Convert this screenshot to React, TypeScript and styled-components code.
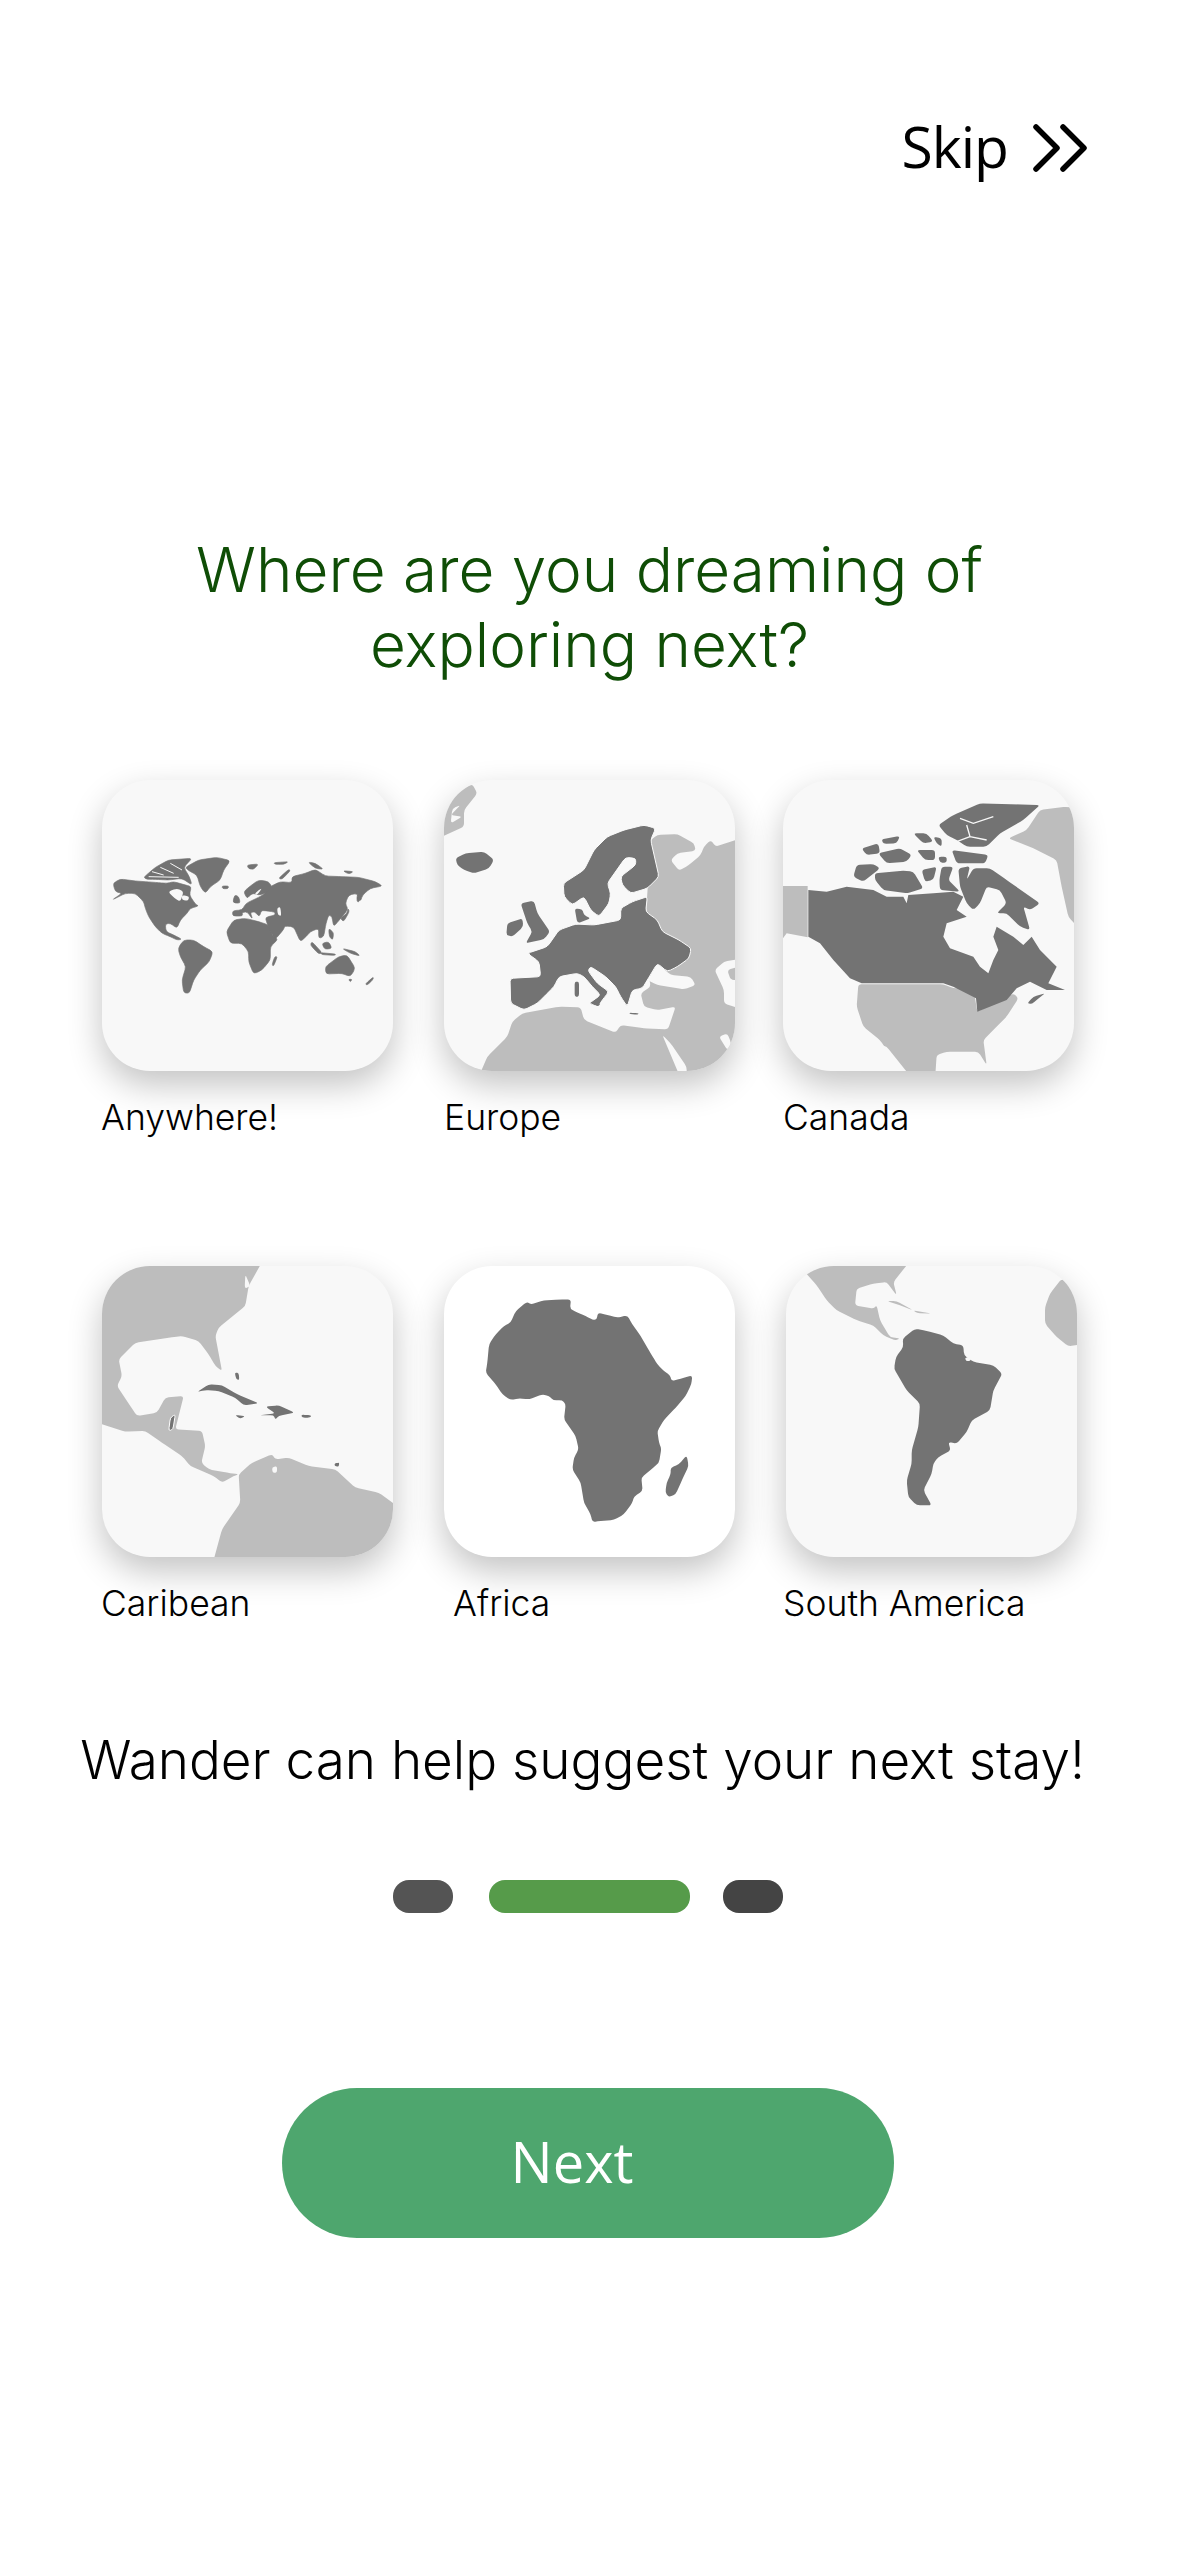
import React from "react";
import styled, { createGlobalStyle } from "styled-components";

const DARK = "#737373";
const LIGHT = "#bdbdbd";
const SEA = "#f8f8f8";

const GlobalStyle = createGlobalStyle`
  html, body {
    margin: 0;
    padding: 0;
    background: #ffffff;
  }
`;

const Page = styled.div`
  width: 1179px;
  height: 2556px;
  overflow: hidden;
  background: #ffffff;
  font-family: Inter, "Liberation Sans", sans-serif;
  color: #000000;
`;

const Header = styled.div`
  display: flex;
  justify-content: flex-end;
  align-items: center;
  gap: 24px;
  height: 60px;
  padding: 118px 91px 0 0;
`;

const SkipText = styled.span`
  position: relative;
  top: -2px;
  font-family: "Open Sans", "Noto Sans", sans-serif;
  font-size: 57px;
  line-height: 60px;
  letter-spacing: -1px;
`;

const Title = styled.h1`
  margin: 354px 0 0;
  font-size: 62px;
  line-height: 75px;
  font-weight: 350;
  text-align: center;
  color: #0f4d06;
`;

const TileRow = styled.div`
  display: flex;
  height: 486px;
  padding-left: 102px;
`;

const Rows = styled.div`
  margin-top: 98px;
`;

const Tile = styled.div<{ $width: number }>`
  width: ${(p) => p.$width}px;
  flex: none;
`;

const Card = styled.div<{ $bg: string }>`
  width: 291px;
  height: 291px;
  border-radius: 48px;
  overflow: hidden;
  background: ${(p) => p.$bg};
  box-shadow: 0 14px 34px rgba(0, 0, 0, 0.24);
`;

const Art = styled.svg`
  display: block;
  width: 291px;
  height: 291px;
  filter: blur(0.35px);
`;

const Label = styled.div<{ $shift: number }>`
  margin: 26px 0 0 ${(p) => p.$shift}px;
  font-size: 35.5px;
  line-height: 42px;
  font-weight: 350;
`;

const Tagline = styled.p`
  margin: -23px 0 0;
  padding-right: 14px;
  font-size: 53px;
  line-height: 62px;
  font-weight: 350;
  text-align: center;
`;

const Dots = styled.div`
  display: flex;
  align-items: center;
  margin: 89px 0 0 393px;
`;

const Dot = styled.div<{ $width: number; $color: string; $gap: number }>`
  width: ${(p) => p.$width}px;
  height: 33px;
  margin-right: ${(p) => p.$gap}px;
  border-radius: 16px;
  background: ${(p) => p.$color};
`;

const NextButton = styled.button`
  display: block;
  width: 612px;
  height: 150px;
  margin: 175px 0 0 282px;
  padding: 0 32px 4px 0;
  border: none;
  border-radius: 75px;
  background: #4ea66e;
  color: #ffffff;
  font-family: "Open Sans", "Noto Sans", sans-serif;
  font-size: 56px;
`;

// traced outlines are straight segments, this rounds the corners so coasts don't look cut
function roundCoast(d: string) {
  const tokens = d.match(/[MLHVZ]|-?\d+(\.\d+)?/g) || [];
  const pts: [number, number][] = [];
  let x = 0;
  let y = 0;
  for (let i = 0; i < tokens.length; i++) {
    const t = tokens[i];
    if (t === "M" || t === "L") {
      x = Number(tokens[++i]);
      y = Number(tokens[++i]);
    } else if (t === "H") {
      x = Number(tokens[++i]);
    } else if (t === "V") {
      y = Number(tokens[++i]);
    } else {
      continue;
    }
    pts.push([x, y]);
  }
  const along = (a: [number, number], b: [number, number]) => {
    const len = Math.hypot(b[0] - a[0], b[1] - a[1]) || 1;
    const k = Math.min(0.35, 10 / len);
    return [a[0] + (b[0] - a[0]) * k, a[1] + (b[1] - a[1]) * k];
  };
  let out = "";
  pts.forEach((p, i) => {
    const prev = pts[(i + pts.length - 1) % pts.length];
    const next = pts[(i + 1) % pts.length];
    const a = along(p, prev);
    const b = along(p, next);
    out += `${i === 0 ? "M" : "L"}${a[0]} ${a[1]} Q${p[0]} ${p[1]} ${b[0]} ${b[1]} `;
  });
  return out + "Z";
}

const Land = ({ d, ...rest }: React.SVGProps<SVGPathElement> & { d: string }) => (
  <path d={roundCoast(d)} {...rest} />
);

const WorldArt = () => (
  <Art viewBox="0 0 873 873">
    <g fill={DARK} stroke={DARK} strokeWidth="2">
      <Land d="M33 310 L55 297 L100 303 L130 305 L170 308 L195 310 L215 305 L250 315 L268 320 L262 345 L280 372 L290 378 L265 385 L255 400 L235 420 L225 445 L205 430 L190 432 L192 455 L215 465 L240 478 L225 480 L205 470 L180 460 L160 440 L140 410 L130 385 L125 365 L100 340 L70 340 L30 360 L60 340 L40 335 Z" />
      <Land d="M125 292 L160 262 L200 240 L270 235 L245 262 L262 290 L270 315 L240 295 L200 300 L160 298 L135 298 Z" />
      <Land d="M250 262 L290 240 L345 232 L385 242 L365 270 L355 300 L325 320 L310 340 L295 320 L285 285 L260 272 Z" />
      <Land d="M360 318 L380 318 L378 326 L362 326 Z" />
      <Land d="M435 255 L470 252 L455 268 L440 266 Z" />
      <Land d="M530 295 L560 268 L565 272 L540 298 Z" />
      <Land d="M618 246 L640 250 L665 268 L640 265 Z" />
      <Land d="M515 248 L560 245 L545 253 L520 253 Z" />
      <Land d="M722 272 L755 275 L740 282 Z" />
      <Land d="M228 505 L245 480 L275 480 L305 500 L333 515 L322 545 L295 570 L275 600 L262 640 L245 638 L240 600 L252 560 L235 530 Z" />
      <Land d="M373 455 L395 420 L430 415 L470 425 L500 435 L510 465 L528 478 L505 500 L505 540 L480 570 L455 582 L440 545 L440 515 L420 490 L385 490 Z" />
      <Land d="M518 530 L526 530 L515 558 L510 555 Z" />
      <Land d="M392 408 L392 392 L420 390 L432 370 L470 352 L490 340 L500 322 L535 305 L570 308 L570 290 L610 280 L640 268 L670 288 L720 290 L770 292 L820 305 L842 318 L805 325 L782 345 L775 365 L765 340 L740 345 L730 370 L738 388 L712 420 L695 440 L690 410 L680 405 L672 430 L665 470 L650 475 L650 445 L625 455 L612 470 L595 485 L575 440 L548 438 L545 448 L520 478 L505 455 L495 430 L490 412 L520 405 L518 396 L490 392 L478 392 L472 410 L458 395 L445 398 L452 418 L435 395 L420 398 L422 408 Z" />
      <Land d="M425 335 L445 318 L470 300 L500 305 L510 322 L490 340 L470 345 L455 340 L445 345 L435 355 Z" />
      <Land d="M398 345 L410 350 L415 370 L392 368 Z" />
      <Land d="M765 345 L780 335 L772 365 L765 365 Z" />
      <Land d="M715 415 L735 400 L738 385 L742 395 L725 425 Z" />
      <Land d="M660 490 L680 485 L690 505 L668 508 Z" />
      <Land d="M630 485 L660 518 L650 522 L625 495 Z" />
      <Land d="M680 445 L695 458 L692 480 L682 470 Z" />
      <Land d="M655 518 L700 522 L700 526 L660 524 Z" />
      <Land d="M720 505 L760 515 L775 528 L745 520 Z" />
      <Land d="M670 560 L710 530 L735 525 L760 565 L745 590 L720 580 L672 582 Z" />
      <Land d="M790 612 L815 590 L812 600 L796 615 Z" />
      <Land d="M740 598 L750 598 L745 606 Z" />
    </g>
    <g fill={SEA}>
      <Land d="M198 335 L225 325 L245 335 L235 365 L218 355 Z" />
      <Land d="M240 345 L262 350 L258 362 L240 360 Z" />
      <Land d="M525 385 L535 380 L538 408 L528 405 Z" />
      <Land d="M470 330 L480 325 L465 345 L458 342 Z" />
    </g>
    <path fill="none" stroke={SEA} strokeWidth="3" d="M150 275 L185 285 M175 262 L215 280 M205 250 L240 270 M140 290 L230 292" />
  </Art>
);

const EuropeArt = () => (
  <Art viewBox="0 0 873 873">
    <Land fill={LIGHT} d="M-20 176 L-20 110 L30 40 L85 12 L100 40 L60 90 L60 140 Z" />
    <Land fill={LIGHT} d="M620 180 L640 165 L700 162 L750 190 L755 212 L700 220 L680 240 L705 272 L735 255 L770 225 L780 200 L800 180 L815 200 L900 172 V900 H100 L130 830 L190 770 L205 725 L235 700 L345 680 L410 682 L420 720 L515 758 L530 735 L600 745 L672 748 L695 680 L640 690 L600 680 L590 640 L620 620 L600 500 Z" />
    <g fill={SEA}>
      <Land d="M610 600 L640 550 L680 585 L740 590 L755 615 L720 628 L640 615 Z" />
      <Land d="M812 570 L840 545 L900 535 V690 L840 670 L840 630 Z" />
      <Land d="M655 765 L680 790 L728 860 V900 H712 Z" />
      <Land d="M825 770 L850 760 L862 790 L850 810 Z" />
      <Land d="M20 130 L55 110 L20 105 L50 75 L25 85 Z" />
    </g>
    <Land fill={LIGHT} d="M850 570 L900 555 V600 L860 600 Z" />
    <g fill={DARK} stroke="#fafafa" strokeWidth="3">
      <Land d="M250 520 L310 500 L345 450 L395 432 L450 435 L530 420 L530 385 L565 365 L610 350 L605 395 L640 420 L655 455 L705 480 L742 505 L735 535 L700 560 L670 575 L640 550 L610 600 L595 625 L565 630 L550 680 L530 650 L515 620 L485 590 L440 560 L432 572 L460 610 L495 635 L475 660 L462 680 L435 670 L470 645 L445 620 L420 590 L400 580 L345 590 L330 620 L300 650 L280 670 L240 690 L200 670 L198 595 L290 590 L285 545 Z" />
      <Land d="M358 310 L420 270 L450 210 L490 170 L540 150 L600 135 L635 145 L620 180 L645 290 L610 325 L560 340 L535 315 L530 290 L575 255 L575 235 L545 232 L490 310 L500 340 L495 370 L465 410 L440 390 L420 350 L385 375 L360 350 Z" />
    </g>
    <g fill={DARK}>
      <Land d="M392 385 L415 388 L420 405 L440 415 L400 430 Z" />
      <Land d="M230 370 L270 362 L280 400 L318 455 L300 478 L245 490 L265 455 L250 430 L240 400 Z" />
      <Land d="M190 430 L235 415 L238 440 L205 470 L187 465 Z" />
      <Land d="M35 235 L65 220 L120 215 L150 240 L135 265 L90 280 L60 270 L40 255 Z" />
      <Land d="M392 605 L405 605 L405 650 L392 650 Z" />
      <Land d="M435 665 L470 670 L462 680 Z" />
      <Land d="M555 698 L585 700 L580 704 L558 702 Z" />
    </g>
  </Art>
);

const CanadaArt = () => (
  <Art viewBox="129 120 873 873">
    <g fill={LIGHT}>
      <path d="M129 438 H203 V592 L140 580 L129 595 Z" />
      <Land d="M355 733 L610 733 L640 745 L700 745 L712 815 L820 760 L835 775 L800 830 L770 860 L730 900 L740 975 L715 935 L620 935 L590 945 L585 1020 H490 L460 960 L420 900 L370 860 L350 800 Z" />
      <Land d="M805 295 L860 270 L900 210 L980 200 L1030 210 V580 L985 530 L965 440 L950 360 L880 325 Z" />
    </g>
    <Land fill={SEA} d="M420 915 L440 920 L520 1020 L490 1020 Z" />
    <g fill={DARK}>
      <path d="M205 450 L260 455 L320 440 L400 450 L440 470 L490 470 L500 490 L505 465 L580 460 L640 455 L670 470 L650 510 L680 530 L620 550 L610 590 L630 625 L700 650 L720 680 L745 700 L760 660 L775 630 L760 590 L770 560 L820 590 L850 615 L875 590 L900 630 L950 680 L925 730 L975 750 L920 750 L870 725 L830 745 L800 780 L712 815 L708 775 L640 740 L610 730 L365 730 L330 715 L280 660 L240 610 L205 590 Z" />
      <Land d="M862 790 L880 770 L915 760 L905 768 L875 792 Z" />
      <Land d="M595 255 L640 225 L720 190 L900 195 L850 240 L780 280 L740 320 L680 320 L650 300 L620 285 Z" />
      <Land d="M365 325 L415 310 L420 340 L380 345 Z" />
      <Land d="M415 340 L480 325 L515 345 L500 365 L440 370 Z" />
      <Land d="M425 298 L480 288 L470 310 L430 312 Z" />
      <Land d="M520 280 L560 280 L580 305 L550 310 Z" />
      <Land d="M530 330 L585 330 L585 360 L555 360 Z" />
      <Land d="M580 290 L605 295 L605 320 L590 310 Z" />
      <Land d="M635 330 L745 345 L735 370 L650 370 Z" />
      <Land d="M595 350 L620 350 L620 368 L600 368 Z" />
      <Land d="M350 375 L400 372 L420 385 L370 425 L340 410 Z" />
      <Land d="M405 400 L490 392 L520 395 L550 445 L500 460 L430 450 L405 420 Z" />
      <Land d="M545 390 L590 380 L580 420 L555 425 Z" />
      <Land d="M605 380 L640 380 L625 420 L660 455 L600 450 L598 420 Z" />
      <Land d="M655 385 L690 378 L680 420 L700 385 L750 385 L800 420 L900 490 L870 510 L850 500 L870 570 L840 560 L800 520 L770 520 L800 490 L780 450 L740 440 L720 490 L700 510 L680 490 L660 440 Z" />
    </g>
    <path fill="none" stroke={SEA} strokeWidth="4" d="M660 235 L700 250 L760 230 M680 255 L690 290 L650 305 M690 290 L740 300" />
  </Art>
);

const CaribbeanArt = () => (
  <Art viewBox="0 0 873 873">
    <g fill={LIGHT}>
      <Land d="M-30 -30 H490 L440 60 L430 120 L350 185 L340 210 L360 315 L340 300 L320 265 L290 225 L240 210 L200 215 L100 230 L50 280 L60 330 L45 360 L85 420 L105 450 L165 440 L190 395 L245 390 L220 490 L300 495 L310 540 L298 590 L320 610 L375 620 L410 625 L395 630 L360 650 L335 630 L265 600 L240 570 L180 530 L130 495 L70 497 L-30 465 Z" />
      <Land d="M410 625 L450 590 L510 565 L520 580 L560 575 L620 600 L700 610 L760 665 L830 680 L900 730 V900 H330 L360 790 L415 710 Z" />
    </g>
    <Land fill={SEA} d="M510 605 L525 600 L525 620 L512 620 Z" />
    <Land fill={SEA} d="M430 25 L445 60 L428 68 Z" />
    <g fill={DARK}>
      <Land d="M285 378 L320 355 L360 358 L405 385 L470 412 L425 418 L400 395 L350 375 L310 372 Z" />
      <Land d="M490 422 L530 418 L578 440 L530 450 L520 460 L515 448 L470 448 L520 442 Z" />
      <Land d="M398 447 L430 450 L415 458 Z" />
      <Land d="M598 446 L628 448 L625 455 L600 455 Z" />
      <Land d="M698 592 L712 590 L710 602 L698 600 Z" />
      <Land d="M398 320 L410 320 L412 342 L403 340 Z" />
      <Land d="M205 455 L220 445 L213 490 L200 495 Z" stroke="#ffffff" strokeWidth="3" />
    </g>
  </Art>
);

const AfricaArt = () => (
  <Art viewBox="0 0 873 873">
    <g fill={DARK}>
      <Land d="M248 108 L262 115 L300 103 L345 101 L381 100 L378 128 L400 140 L425 150 L447 162 L458 160 L462 140 L490 147 L520 155 L550 148 L565 175 L590 210 L610 245 L625 270 L640 295 L660 315 L678 328 L683 345 L710 338 L745 328 L742 355 L725 390 L695 425 L660 462 L640 495 L645 530 L652 548 L645 590 L620 612 L592 635 L596 675 L570 692 L565 710 L540 745 L510 762 L470 765 L445 768 L440 745 L420 710 L410 650 L385 610 L390 575 L404 550 L395 510 L360 460 L365 415 L355 403 L328 403 L315 390 L295 385 L255 400 L225 397 L200 402 L175 385 L155 355 L125 320 L130 290 L135 235 L155 205 L180 180 L200 170 L215 135 Z" />
      <Land d="M728 568 L734 600 L715 640 L695 685 L675 693 L664 680 L668 650 L680 625 L680 605 L705 595 Z" />
    </g>
  </Art>
);

const SouthAmericaArt = () => (
  <Art viewBox="138 77 873 873">
    <g fill={LIGHT}>
      <Land d="M190 90 L230 50 H520 L460 125 L470 165 L440 125 L400 130 L350 145 L345 195 L400 205 L410 195 L420 240 L450 290 L480 295 L465 300 L430 285 L400 255 L350 240 L290 210 L260 180 L230 135 Z" />
      <Land d="M440 182 L470 182 L520 210 L480 195 Z" />
      <Land d="M520 210 L575 220 L530 218 Z" />
      <Land d="M965 115 L1040 170 V310 L985 318 L950 290 L915 250 L915 200 L930 160 Z" />
    </g>
    <Land fill={DARK} d="M488 295 L525 265 L560 272 L610 285 L640 310 L670 315 L672 345 L700 365 L760 375 L787 400 L760 450 L750 510 L695 540 L680 575 L650 610 L625 605 L632 630 L595 650 L580 670 L575 700 L550 750 L575 795 L530 795 L505 770 L500 720 L515 670 L515 630 L535 560 L540 490 L500 450 L462 385 L468 350 L490 320 Z" />
    <Land fill={SEA} d="M675 352 L690 350 L692 362 L678 362 Z" />
  </Art>
);

const rows = [
  [
    { name: "Anywhere!", art: <WorldArt />, bg: SEA, width: 342, shift: -1 },
    { name: "Europe", art: <EuropeArt />, bg: SEA, width: 339, shift: 0 },
    { name: "Canada", art: <CanadaArt />, bg: SEA, width: 291, shift: 0 },
  ],
  [
    { name: "Caribean", art: <CaribbeanArt />, bg: SEA, width: 342, shift: -1 },
    { name: "Africa", art: <AfricaArt />, bg: "#ffffff", width: 342, shift: 9 },
    { name: "South America", art: <SouthAmericaArt />, bg: SEA, width: 291, shift: -3 },
  ],
];

export default function App() {
  return (
    <Page>
      <GlobalStyle />
      <Header>
        <SkipText>Skip</SkipText>
        <svg width="56" height="50" viewBox="0 0 56 50" fill="none" stroke="#000" strokeWidth="5.5" strokeLinecap="round" strokeLinejoin="round">
          <path d="M4 4 L25 25 L4 46" />
          <path d="M31 4 L52 25 L31 46" />
        </svg>
      </Header>
      <Title>
        Where are you dreaming of
        <br />
        exploring next?
      </Title>
      <Rows>
        {rows.map((row, i) => (
          <TileRow key={i}>
            {row.map((t) => (
              <Tile key={t.name} $width={t.width}>
                <Card $bg={t.bg}>{t.art}</Card>
                <Label $shift={t.shift}>{t.name}</Label>
              </Tile>
            ))}
          </TileRow>
        ))}
      </Rows>
      <Tagline>Wander can help suggest your next stay!</Tagline>
      <Dots>
        <Dot $width={60} $color="#545454" $gap={36} />
        <Dot $width={201} $color="#569b4a" $gap={33} />
        <Dot $width={60} $color="#444444" $gap={0} />
      </Dots>
      <NextButton>Next</NextButton>
    </Page>
  );
}
